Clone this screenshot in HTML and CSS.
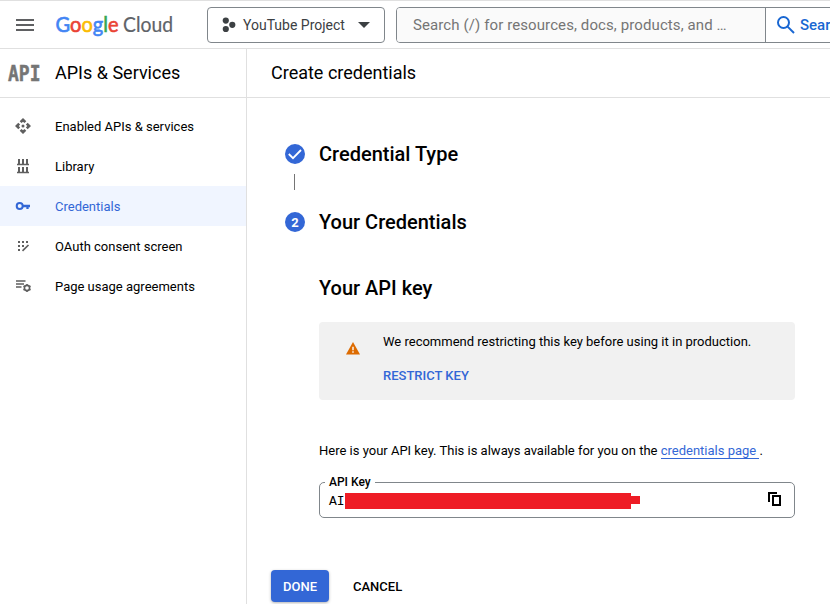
FILE: index.html
```html
<!DOCTYPE html>
<html lang="en">
<head>
<meta charset="utf-8">
<title>Create credentials</title>
<link rel="stylesheet" href="styles.css">
</head>
<body>
<header class="topbar">
  <svg class="menu" width="18" height="12" viewBox="0 0 18 12"><path d="M0 1h18M0 6h18M0 11h18" stroke="#5f6062" stroke-width="2"/></svg>
  <svg class="logo" width="120" height="30" viewBox="0 0 120 30">
    <text class="logo-google" y="22" x="0.500" textLength="63" lengthAdjust="spacingAndGlyphs"><tspan fill="#4285f4" stroke="#4285f4">G</tspan><tspan fill="#ea4335" stroke="#ea4335">o</tspan><tspan fill="#fbbc04" stroke="#fbbc04">o</tspan><tspan fill="#4285f4" stroke="#4285f4">g</tspan><tspan fill="#34a853" stroke="#34a853">l</tspan><tspan fill="#ea4335" stroke="#ea4335">e</tspan></text>
    <text class="logo-cloud" y="22" x="68" textLength="50" lengthAdjust="spacingAndGlyphs">Cloud</text>
  </svg>
  <div class="project">
    <svg width="14" height="16" viewBox="0 0 14 16" fill="#3c4043"><circle cx="3.8" cy="3.6" r="3.1"/><circle cx="3.8" cy="12" r="3.1"/><circle cx="10.3" cy="7.8" r="3.1"/></svg>
    <span>YouTube Project</span>
    <svg class="caret" width="12" height="6" viewBox="0 0 12 6"><path d="M0 0h12L6 6z" fill="#3c4043"/></svg>
  </div>
  <div class="search">
    <div class="search-field">Search (/) for resources, docs, products, and …</div>
    <div class="search-button">
      <svg width="18" height="18" viewBox="0 0 18 18" fill="none" stroke="#1967d2" stroke-width="2"><circle cx="6.5" cy="6.5" r="5.5"/><path d="M10.6 10.6L17 17"/></svg>
      <span>Search</span>
    </div>
  </div>
</header>
<div class="layout">
  <aside class="sidebar">
    <div class="section-title"><span class="api-mark">API</span><span class="section-name">APIs &amp; Services</span></div>
    <nav class="nav">
      <div class="item">
        <svg width="16" height="16" viewBox="0 0 16 16" fill="#5f5f5f"><path d="M8 0l3.300 3.300-1.800 1.800L8 3.800 6.500 5.100 4.700 3.300zM8 16l3.300-3.300-1.800-1.800L8 12.200l-1.500-1.300-1.800 1.800zM0 8l3.300-3.300 1.800 1.800L3.800 8l1.300 1.500-1.800 1.800zM16 8l-3.300-3.300-1.800 1.800L12.200 8l-1.300 1.500 1.800 1.800z"/><circle cx="8" cy="8" r="1.500"/></svg>
        <span>Enabled APIs &amp; services</span></div>
      <div class="item">
        <svg width="16" height="16" viewBox="0 0 16 16"><path d="M2 6.500h12M2 14.500h12" stroke="#5f5f5f" stroke-width="1.300"/><path d="M4 1v5M8 1v5M12 1v5M4 9v5M8 9v5M12 9v5" stroke="#5f5f5f" stroke-width="2"/></svg>
        <span>Library</span></div>
      <div class="item active">
        <svg width="16" height="16" viewBox="0 0 16 16" fill="none" stroke="#3367d6" stroke-width="2"><circle cx="4.700" cy="8" r="3"/><path d="M7.500 8H15M12.500 8v3" stroke-width="2.300"/></svg>
        <span>Credentials</span></div>
      <div class="item">
        <svg width="16" height="16" viewBox="0 0 16 16" fill="#5f5f5f"><path d="M3 3h2v2H3zM7 3h2v2H7zM11 3h2v2h-2zM3 7h2v2H3zM7 7h2v2H7zM3 11h2v2H3z"/><path d="M7.500 12.800L13.500 7" stroke="#5f5f5f" stroke-width="1.700"/></svg>
        <span>OAuth consent screen</span></div>
      <div class="item">
        <svg width="16" height="16" viewBox="0 0 16 16" fill="none" stroke="#5f5f5f" stroke-width="1.600"><path d="M1 3h9.500M1 6h8M1 9h5.500"/><circle cx="12" cy="10" r="2.600"/><path d="M12 6v1.500M12 12.500V14M8.500 8l1.300.8M14.200 11.200l1.300.8M8.500 12l1.300-.8M14.200 8.800l1.300-.8"/></svg>
        <span>Page usage agreements</span></div>
    </nav>
  </aside>
  <main class="main">
    <h1 class="page-title">Create credentials</h1>
    <div class="steps">
      <div class="step">
        <svg width="20" height="20" viewBox="0 0 20 20"><circle cx="10" cy="10" r="10" fill="#3367d6"/><path d="M3.800 10l4.200 4.200L16 6" fill="none" stroke="#fff" stroke-width="1.800"/></svg>
        <h2>Credential Type</h2>
      </div>
      <div class="connector"></div>
      <div class="step"><span class="badge">2</span><h2>Your Credentials</h2></div>
      <section class="content">
        <h2>Your API key</h2>
        <div class="notice">
          <svg width="14" height="13" viewBox="0 0 14 13"><path d="M7 0l7 12.500H0z" fill="#dd6b00"/><path d="M7 4.800v3.500M7 9.200v1.500" stroke="#fff" stroke-width="1.400"/></svg>
          <div><p>We recommend restricting this key before using it in production.</p><div class="restrict">RESTRICT KEY</div></div>
        </div>
        <p class="hint">Here is your API key. This is always available for you on the <a>credentials page </a>.</p>
        <div class="key-box">
          <span class="key-label">API Key</span>
          <span class="key-value">AI</span>
          <span class="redaction"></span><span class="redaction-end"></span>
          <svg class="copy" width="14" height="14" viewBox="0 0 14 14" fill="none" stroke="#000" stroke-width="2"><path d="M1 10V1h8"/><path d="M5 4h7v9H5z"/></svg>
        </div>
      </section>
    </div>
    <div class="actions"><button class="done">DONE</button><button class="cancel">CANCEL</button></div>
  </main>
</div>
</body>
</html>
```
FILE: styles.css
```css
* { box-sizing: border-box; }
body {
  margin: 0;
  height: 604px;
  overflow: hidden;
  background: #fff;
  color: #000;
  font: 13px/20px Roboto, sans-serif;
}
h1, h2, p { margin: 0; }
svg { display: block; flex: none; }

.topbar {
  display: flex;
  align-items: center;
  height: 49px;
  padding-left: 16px;
  border-top: 1px solid #e0e0e0;
  border-bottom: 1px solid #e0e0e0;
  overflow: hidden;
}
.menu { margin-right: 21px; }
.logo { margin-right: 32px; }
.logo text { font-family: Lato, sans-serif; font-size: 20.5px; }
.logo-google { stroke-width: .6; }
.logo-cloud { fill: #5f6368; stroke: #5f6368; stroke-width: .2; }
.project {
  display: flex;
  flex: none;
  align-items: center;
  width: 178px;
  height: 36px;
  padding: 0 14px;
  border: 1px solid #80868b;
  border-radius: 4px;
  color: #3c4043;
  font-size: 14px;
  white-space: nowrap;
}
.project span { margin-left: 7px; }
.caret { margin-left: auto; }
.search {
  display: flex;
  flex: none;
  width: 500px;
  height: 36px;
  margin-left: 11px;
  border: 1px solid #80868b;
  border-radius: 4px;
  font-size: 15px;
  line-height: 34px;
  overflow: hidden;
}
.search-field {
  width: 369px;
  padding-left: 16px;
  border-right: 1px solid #80868b;
  background: #fafafa;
  color: #757575;
  letter-spacing: .1px;
  white-space: nowrap;
}
.search-button {
  display: flex;
  align-items: center;
  gap: 5px;
  padding-left: 11px;
  color: #1967d2;
  font-weight: 500;
}

.layout { display: grid; grid-template-columns: 247px 1fr; height: 555px; }
.sidebar { border-right: 1px solid #e0e0e0; }
.section-title, .page-title {
  height: 49px;
  border-bottom: 1px solid #e0e0e0;
  font-size: 18px;
  font-weight: 400;
  line-height: 48px;
}
.section-title { display: flex; padding-left: 8px; }
.api-mark {
  width: 47px;
  color: #757575;
  font: 700 18px/49px "DejaVu Sans Mono", monospace;
  -webkit-text-stroke: .4px #757575;
  transform: scaleY(1.2);
}
.page-title { padding-left: 24px; }
.nav { padding-top: 8px; }
.item {
  display: flex;
  align-items: center;
  gap: 24px;
  height: 40px;
  padding-left: 15px;
}
.item span { padding-top: 2px; }
.active { background: #f0f5ff; color: #3367d6; }

.steps { padding: 46px 0 0 38px; }
.step { display: flex; align-items: center; gap: 14px; height: 20px; }
h2 { font-size: 20px; font-weight: 500; line-height: 24px; }
.badge {
  width: 20px;
  height: 20px;
  padding-top: 1px;
  border-radius: 50%;
  background: #3367d6;
  color: #fff;
  font-weight: 700;
  text-align: center;
}
.connector { width: 1px; height: 16px; margin: 10px 0 22px 9px; background: #757575; }
.content { width: 476px; margin: 44px 0 0 34px; }
.notice {
  display: flex;
  gap: 23px;
  height: 78px;
  margin-top: 22px;
  padding: 10px 0 0 27px;
  border-radius: 4px;
  background: #f1f1f1;
}
.notice svg { margin-top: 10px; }
.restrict { margin-top: 14px; color: #3367d6; font-weight: 500; }
.hint { margin-top: 41px; white-space: nowrap; }
.hint a { border-bottom: 1px solid #3367d6; color: #3367d6; white-space: pre; }
.key-box {
  position: relative;
  display: flex;
  align-items: center;
  height: 36px;
  margin-top: 21px;
  padding: 2px 12px 0 9px;
  border: 1px solid #80868b;
  border-radius: 5px;
}
.key-label {
  position: absolute;
  top: -11px;
  left: 5px;
  padding: 0 4px;
  background: #fff;
  font-size: 12px;
  font-weight: 500;
}
.key-value { width: 16px; padding-top: 2px; font-family: "Liberation Mono", monospace; }
.redaction { width: 286px; height: 16px; background: #ee1c25; }
.redaction-end { width: 9px; height: 8px; margin-top: -2px; background: #ee1c25; }
.copy { margin: -4px 0 0 auto; }
.actions { display: flex; gap: 12px; margin: 52px 0 0 24px; }
button {
  height: 32px;
  padding: 2px 12px 0;
  border: 0;
  border-radius: 4px;
  background: none;
  color: #000;
  font: 500 13px/30px Roboto, sans-serif;
}
.done {
  width: 58px;
  background: #3367d6;
  color: #fff;
  box-shadow: 0 1px 3px rgba(0, 0, 0, .3);
}
```
